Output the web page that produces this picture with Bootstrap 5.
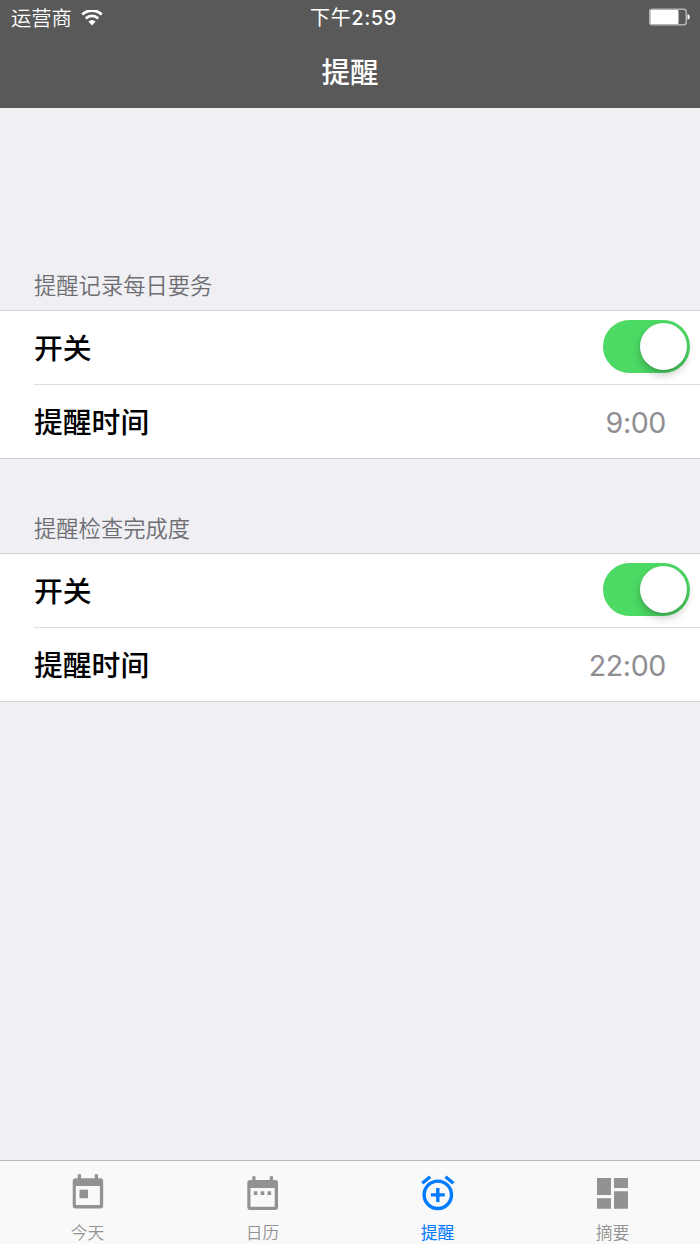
<!DOCTYPE html>
<html lang="zh-CN">
<head>
<meta charset="utf-8">
<meta name="viewport" content="width=device-width, initial-scale=1">
<title>提醒</title>
<link href="https://cdn.jsdelivr.net/npm/bootstrap@5.3.0/dist/css/bootstrap.min.css" rel="stylesheet">
<style>
  body { font-family: Inter, "Noto Sans CJK SC", sans-serif; background: #efeff4; color: #000; }
  .top-area { height: 108px; background: #595959; color: #fff; }
  .status-bar { height: 36px; padding: 0 10px 0 11px; font-size: 20.3px; line-height: 38px; }
  .carrier { font-weight: 350; }
  .status-time { font-size: 20px; font-weight: 500; letter-spacing: .6px; padding-left: 6px; line-height: 37px; }
  .day-part { font-weight: 400; }
  .page-title { height: 72px; line-height: 73px; font-size: 28.5px; font-weight: 500; margin: 0; }
  .group-label { padding: 0 34px; font-size: 22.3px; font-weight: 350; line-height: 52px; height: 50px; color: #6d6d72; }
  .group-first { margin-top: 152px; }
  .group-next { margin-top: 44px; }
  .settings { height: 149px; border: solid #d2d2d6; border-width: 1px 0; border-radius: 0; background: #fff; }
  .setting { height: 73px; margin-left: 34px; padding: 2px 34px 0 0; border: 0; background: none; color: #000; font-size: 28.8px; line-height: 71px; font-weight: 500; }
  .setting + .setting { height: 74px; border-top: 1px solid #dcdcdf; }
  .setting:first-child { padding-right: 10px; }
  .setting-value { color: #8e8e93; font-weight: 400; font-size: 28.6px; letter-spacing: -.4px; }
  .toggle { width: 87px; height: 53px; border-radius: 27px; background: #4cd964; padding: 3px; margin-top: -5px; overflow: visible; }
  .toggle-knob { width: 47px; height: 47px; border-radius: 50%; background: #fff; box-shadow: 0 5px 8px rgba(0,0,0,.22), 0 1px 2px rgba(0,0,0,.12); }
  .tab-bar { height: 84px; background: #f9f9f9; border-top: 1px solid #b9b9bd; }
  .tab-bar .nav-link { padding: 10px 0 0; color: #929292; font-size: 16.8px; font-weight: 350; line-height: 24px; }
  .tab-bar .nav-link.active { color: #007aff; font-weight: 400; }
  .tab-bar svg { display: block; margin: 0 auto 10px; }
</style>
</head>
<body>
<div class="d-flex flex-column vh-100 overflow-hidden">
  <header class="top-area flex-shrink-0">
    <div class="status-bar row g-0">
      <div class="col d-flex align-items-center">
        <span class="carrier">运营商</span>
        <svg class="ms-2" width="24" height="18" viewBox="0 0 24 18" fill="none" stroke="#fff" stroke-width="2.8">
          <path d="M2.300 4.500a13.800 13.800 0 0 1 19.400 0M5.800 8.500a8.800 8.800 0 0 1 12.400 0"/>
          <path d="M12 15.500l-3.600-4a5.400 5.400 0 0 1 7.200 0z" fill="#fff" stroke="none"/>
        </svg>
      </div>
      <div class="col-auto status-time"><span class="day-part">下午</span>2:59</div>
      <div class="col d-flex align-items-center justify-content-end">
        <svg class="mb-1" width="41" height="18" viewBox="0 0 41 18">
          <rect x=".75" y="1.250" width="36.5" height="15.5" rx="2.5" fill="none" stroke="#b5b5b5" stroke-width="1.5"/>
          <rect x="1.500" y="2" width="28" height="14" rx="1" fill="#fff"/>
          <path d="M38.5 6.300c3 .5 3 5 0 5.5z" fill="#fff"/>
        </svg>
      </div>
    </div>
    <h1 class="page-title text-center">提醒</h1>
  </header>

  <main class="flex-grow-1">
    <section class="group-first">
      <div class="group-label">提醒记录每日要务</div>
      <div class="settings list-group">
        <div class="setting list-group-item d-flex align-items-center justify-content-between">
          <span>开关</span>
          <div class="toggle d-flex justify-content-end" role="switch" aria-checked="true"><span class="toggle-knob"></span></div>
        </div>
        <div class="setting list-group-item d-flex align-items-center justify-content-between">
          <span>提醒时间</span><span class="setting-value">9:00</span>
        </div>
      </div>
    </section>
    <section class="group-next">
      <div class="group-label">提醒检查完成度</div>
      <div class="settings list-group">
        <div class="setting list-group-item d-flex align-items-center justify-content-between">
          <span>开关</span>
          <div class="toggle d-flex justify-content-end" role="switch" aria-checked="true"><span class="toggle-knob"></span></div>
        </div>
        <div class="setting list-group-item d-flex align-items-center justify-content-between">
          <span>提醒时间</span><span class="setting-value">22:00</span>
        </div>
      </div>
    </section>
  </main>

  <nav class="tab-bar nav nav-fill nav-justified flex-shrink-0">
    <a class="nav-link" href="#">
      <svg width="40" height="40" viewBox="0.500 0 40 40" fill="currentColor">
        <path fill-rule="evenodd" d="M10.2 3.300h3.300v4h13.700v-4h3.300v4h2.200a3 3 0 0 1 3 3v24.200a3 3 0 0 1-3 3h-24.500a3 3 0 0 1-3-3v-24.200a3 3 0 0 1 3-3h2zM8.300 15v19h24.100v-19z"/>
        <path d="M12 18.700h8.500v8.500h-8.500z"/>
      </svg>今天</a>
    <a class="nav-link" href="#">
      <svg width="40" height="40" viewBox="0.500 0 40 40" fill="currentColor">
        <path fill-rule="evenodd" d="M9.800 5.200h3.200v3.800h14.300v-3.800h3.200v3.800h2a3 3 0 0 1 3 3v24a3 3 0 0 1-3 3h-24.700a3 3 0 0 1-3-3v-24a3 3 0 0 1 3-3h2zM8 17v18.700h24.200v-18.700z"/>
        <path d="M11.300 20.300h3.600v3.600h-3.600zM18.200 20.300h3.600v3.600h-3.600zM25 20.300h3.600v3.600h-3.600z"/>
      </svg>日历</a>
    <a class="nav-link active" href="#">
      <svg width="40" height="40" viewBox="0.500 -0.300 40 40" fill="none" stroke="currentColor" stroke-width="3.4">
        <circle cx="20.300" cy="23.500" r="13.700"/>
        <path d="M13.400 23.600h13.900M20.300 16.700v13.900M4.800 12l7.900-6.600M35.900 12l-7.900-6.600"/>
      </svg>提醒</a>
    <a class="nav-link" href="#">
      <svg width="40" height="40" viewBox="0.500 0 40 40" fill="currentColor">
        <path d="M4.500 7h14v17h-14zM21.500 7h14v10h-14zM4.500 27.200h14v10.500h-14zM21.500 20.300h14v17.400h-14z"/>
      </svg>摘要</a>
  </nav>
</div>
<script src="https://cdn.jsdelivr.net/npm/bootstrap@5.3.0/dist/js/bootstrap.bundle.min.js"></script>
</body>
</html>
